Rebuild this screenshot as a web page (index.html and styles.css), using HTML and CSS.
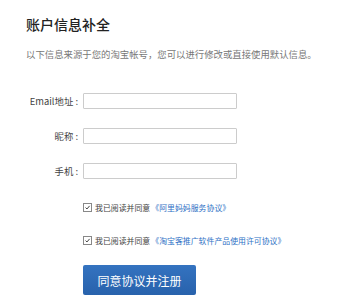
FILE: index.html
```html
<!DOCTYPE html>
<html>
	<head>
	<meta charset="utf-8">
	<link rel="stylesheet" href="styles.css">
	</head>

	<body>
		<div class="page">
			<h1 class="title">账户信息补全</h1>
			<p class="intro">以下信息来源于您的淘宝帐号，您可以进行修改或直接使用默认信息。</p>

			<div class="fields">
				<div class="field">
					<label class="field-label">Email地址 :</label>
					<input class="field-input" type="text">
				</div>
				<div class="field">
					<label class="field-label">昵称 :</label>
					<input class="field-input" type="text">
				</div>
				<div class="field">
					<label class="field-label">手机 :</label>
					<input class="field-input" type="text">
				</div>
			</div>

			<div class="agreements">
				<div class="agree">
					<span class="check">
						<svg viewBox="0 0 9 9" width="9" height="9"><path d="M2 4.6 L3.8 6.4 L7.2 2.4" fill="none" stroke="#333" stroke-width="1.2"/></svg>
					</span>
					<span class="agree-text">我已阅读并同意</span>
					<a class="agree-link" href="#">《阿里妈妈服务协议》</a>
				</div>
				<div class="agree">
					<span class="check">
						<svg viewBox="0 0 9 9" width="9" height="9"><path d="M2 4.6 L3.8 6.4 L7.2 2.4" fill="none" stroke="#333" stroke-width="1.2"/></svg>
					</span>
					<span class="agree-text">我已阅读并同意</span>
					<a class="agree-link" href="#">《淘宝客推广软件产品使用许可协议》</a>
				</div>
			</div>

			<button class="submit" type="button">同意协议并注册</button>
		</div>
	</body>
</html>
```

FILE: styles.css
```css
body, html {
	margin: 0;
	padding: 0;
	background: #fff;
}

body {
	font-family: "Noto Sans CJK SC", "Noto Sans", sans-serif;
	color: #333;
}

.page {
	padding: 17px 0 0 26px;
}

.title {
	margin: 0;
	font-size: 14px;
	line-height: 14px;
	font-weight: 500;
	color: #222;
}

.intro {
	margin: 18px 0 0;
	font-size: 9.4px;
	line-height: 10px;
	color: #777;
	white-space: nowrap;
}

.fields {
	display: flex;
	flex-direction: column;
	gap: 19px;
	margin-top: 34px;
}

.field {
	display: flex;
	align-items: center;
	height: 16px;
}

.field-label {
	width: 52px;
	text-align: right;
	font-size: 9.4px;
	color: #444;
	margin-right: 5px;
	white-space: nowrap;
}

.field-input {
	box-sizing: border-box;
	width: 154px;
	height: 16px;
	margin: 0;
	border: 1px solid #ccc;
	border-radius: 1px;
	padding: 0 3px;
	background: #fff;
}

.agreements {
	display: flex;
	flex-direction: column;
	gap: 23px;
	margin: 23px 0 0 57px;
}

.agree {
	display: flex;
	align-items: center;
	height: 10px;
	font-size: 7.9px;
	white-space: nowrap;
}

.check {
	box-sizing: border-box;
	display: flex;
	width: 9px;
	height: 9px;
	border: 1px solid #888;
	background: #fff;
	margin-right: 3px;
}

.check svg {
	width: 7px;
	height: 7px;
}

.agree-text {
	color: #444;
	margin-right: 1px;
}

.agree-link {
	color: #2d6fc5;
	text-decoration: none;
}

.submit {
	display: block;
	margin: 20px 0 0 57px;
	width: 113px;
	height: 30px;
	border: 0;
	border-radius: 2px;
	background: linear-gradient(#3473c0, #2862ac);
	color: #fff;
	font-family: "Noto Sans CJK SC", sans-serif;
	font-size: 12px;
	padding: 0;
	cursor: pointer;
}
```
